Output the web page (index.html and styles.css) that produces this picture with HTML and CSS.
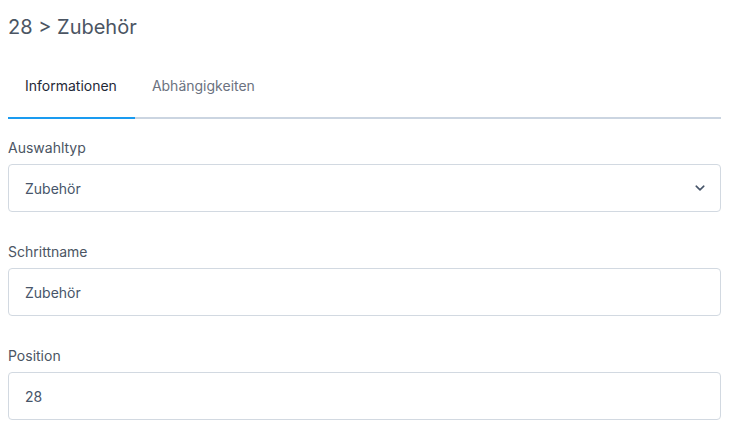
FILE: index.html
```html
<!DOCTYPE html>
<html lang="de">
<head>
<meta charset="utf-8">
<title>28 &gt; Zubehör</title>
<link rel="stylesheet" href="styles.css">
</head>
<body>
<div class="page">
  <h1 class="title">28 &gt; Zubehör</h1>
  <nav class="tabs">
    <a class="tab active">Informationen</a>
    <a class="tab">Abhängigkeiten</a>
  </nav>
  <form class="form">
    <div class="field">
      <label class="label">Auswahltyp</label>
      <div class="control select">
        <span>Zubehör</span>
        <svg class="chevron" width="10" height="6" viewBox="0 0 10 6"><path d="M1.2 1.2 L5 4.8 L8.8 1.2" fill="none" stroke="#475569" stroke-width="1.6" stroke-linecap="round" stroke-linejoin="round"/></svg>
      </div>
    </div>
    <div class="field">
      <label class="label">Schrittname</label>
      <div class="control">Zubehör</div>
    </div>
    <div class="field">
      <label class="label">Position</label>
      <div class="control">28</div>
    </div>
  </form>
</div>
</body>
</html>
```

FILE: styles.css
```css
* { box-sizing: border-box; }
body {
  margin: 0;
  background: #fff;
  font-family: Inter, "Noto Sans", sans-serif;
  color: #475569;
}
.page {
  padding: 13px 16px 0 8px;
}
.title {
  margin: 0;
  font-size: 20px;
  line-height: 28px;
  font-weight: 400;
  color: #4b5563;
}
.tabs {
  display: flex;
  margin-top: 12px;
  border-bottom: 2px solid #cbd5e1;
}
.tab {
  font-size: 14px;
  line-height: 20px;
  padding: 23px 18px 21px 17px;
  color: #6b7280;
  margin-bottom: -2px;
  border-bottom: 2px solid transparent;
}
.tab.active {
  color: #1f2937;
  border-bottom-color: #1a9bf0;
}
.form {
  padding-top: 19px;
}
.field {
  margin-bottom: 30px;
}
.label {
  display: block;
  font-size: 14px;
  line-height: 20px;
  color: #4b5563;
  margin-bottom: 6px;
}
.control {
  display: flex;
  align-items: center;
  justify-content: space-between;
  height: 48px;
  border: 1px solid #d2d9e1;
  border-radius: 4px;
  padding: 0 15px 0 16px;
  font-size: 14px;
  color: #475569;
}
.chevron { display: block; }
```
